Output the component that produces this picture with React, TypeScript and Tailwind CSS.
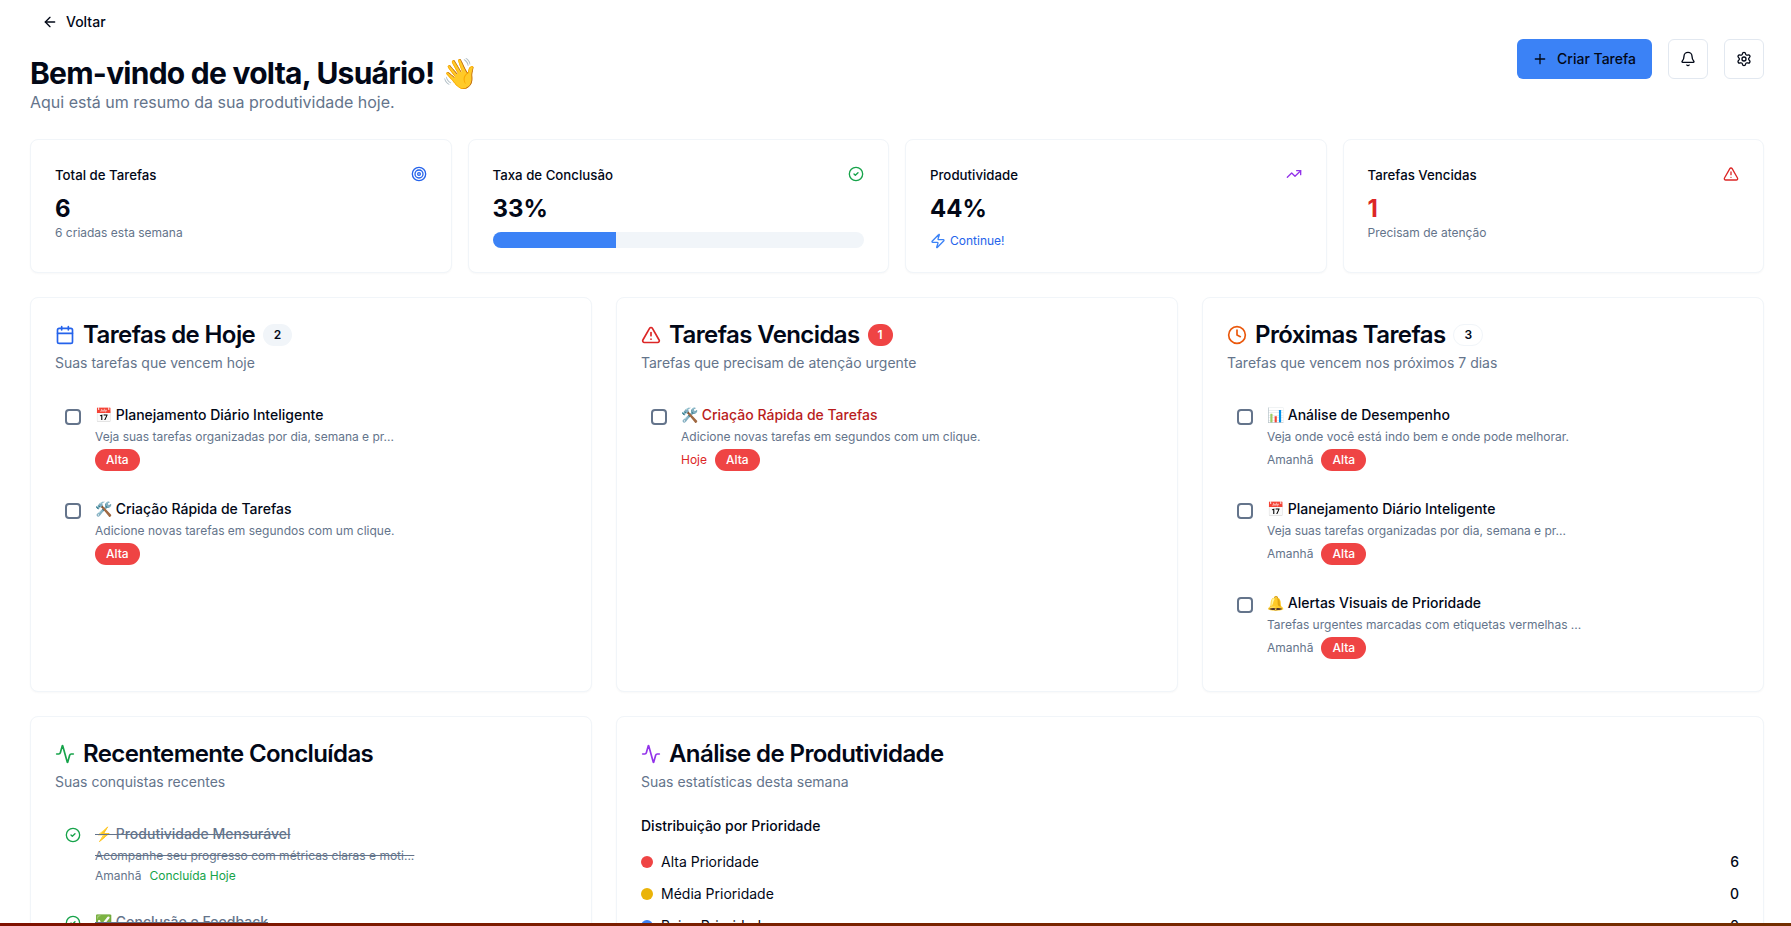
import { AlertTriangle, Activity, ArrowLeft, Bell, Calendar, CheckCircle2, CircleCheck, Clock, Plus, Settings, Target, TrendingUp, Zap } from 'lucide-react';
import type { ReactNode } from 'react';

const Alta = () => (
  <span className="inline-flex h-[22px] items-center rounded-full border border-transparent bg-[#ef4444] px-[10px] text-xs font-medium text-white">Alta</span>
);

interface TaskProps {
  emoji: string;
  title: string;
  desc: string;
  date?: string;
  overdue?: boolean;
}

const Task = ({ emoji, title, desc, date, overdue }: TaskProps) => (
  <div className="flex h-[82px] items-start gap-[14px] pl-[10px]">
    <div className="mt-[4px] h-4 w-4 shrink-0 rounded-[4px] border-2 border-[#64748b] bg-white" />
    <div className="min-w-0 flex-1">
      <div className={`text-sm leading-5 font-medium ${overdue ? 'text-[#b91c1c]' : 'text-[#020817]'}`}>{emoji} {title}</div>
      <div className="mt-[4px] text-xs leading-4 text-[#64748b]">{desc}</div>
      <div className="mt-[4px] flex items-center gap-2 text-xs">
        {date && <span className={overdue ? 'text-[#dc2626]' : 'text-[#64748b]'}>{date}</span>}
        <Alta />
      </div>
    </div>
  </div>
);

const StatCard = ({ title, icon, children }: { title: string; icon: ReactNode; children: ReactNode }) => (
  <div className="h-[134px] rounded-lg border border-[#f1f5f9] bg-white px-6 pt-6 shadow-[0_1px_2px_rgba(0,0,0,0.03)]">
    <div className="flex items-start justify-between">
      <span className="mt-[1px] text-[13.25px] leading-5 font-medium text-[#020817]">{title}</span>
      <span className="mt-[2px]">{icon}</span>
    </div>
    {children}
  </div>
);

const Panel = ({ icon, title, badge, sub, children, className }: { icon: ReactNode; title: string; badge?: ReactNode; sub: string; children: ReactNode; className?: string }) => (
  <div className={`rounded-lg border border-[#f1f5f9] bg-white px-6 pt-[21px] shadow-[0_1px_2px_rgba(0,0,0,0.03)] ${className ?? ''}`}>
    <div className="flex items-center gap-2 text-2xl leading-8 font-semibold tracking-tight text-[#020817]">
      {icon}
      <span>{title}</span>
      {badge}
    </div>
    <div className="mt-[2px] text-sm leading-5 text-[#64748b]">{sub}</div>
    {children}
  </div>
);

export default function App() {
  return (
    <div className="relative h-[926px] overflow-hidden bg-white font-['Inter',sans-serif] text-[#020817]">
      <div className="pl-[30px] pr-[27px]">
        <button className="ml-[12px] flex h-[44px] items-center gap-2 text-sm font-medium">
          <ArrowLeft className="h-4 w-4" /> Voltar
        </button>
        <div className="flex items-start justify-between">
          <div className="pt-[11px]">
            <h1 className="text-3xl leading-9 font-bold tracking-tight">Bem-vindo de volta, Usuário! 👋</h1>
            <p className="-mt-[1px] text-base leading-6 text-[#64748b]">Aqui está um resumo da sua produtividade hoje.</p>
          </div>
          <div className="-mt-[5px] flex items-center gap-4">
            <button className="flex h-10 items-center gap-[9px] rounded-md bg-[#3b82f6] pl-[15px] pr-4 text-sm font-medium text-[#020817]">
              <Plus className="h-4 w-4" /> Criar Tarefa
            </button>
            <button className="flex h-10 w-10 items-center justify-center rounded-md border border-[#e2e8f0] bg-white"><Bell className="h-4 w-4" /></button>
            <button className="flex h-10 w-10 items-center justify-center rounded-md border border-[#e2e8f0] bg-white"><Settings className="h-4 w-4" /></button>
          </div>
        </div>

        <div className="mt-[25px] grid grid-cols-4 gap-4">
          <StatCard title="Total de Tarefas" icon={<Target className="h-4 w-4 text-[#2563eb]" />}>
            <div className="mt-2 text-2xl leading-8 font-bold">6</div>
            <div className="text-xs leading-4 text-[#64748b]">6 criadas esta semana</div>
          </StatCard>
          <StatCard title="Taxa de Conclusão" icon={<CircleCheck className="h-4 w-4 text-[#16a34a]" />}>
            <div className="mt-2 text-2xl leading-8 font-bold">33%</div>
            <div className="mt-[7px] h-4 overflow-hidden rounded-full bg-[#f1f5f9]">
              <div className="h-full w-[33.3%] bg-[#3b82f6]" />
            </div>
          </StatCard>
          <StatCard title="Produtividade" icon={<TrendingUp className="h-4 w-4 text-[#9333ea]" />}>
            <div className="mt-2 text-2xl leading-8 font-bold">44%</div>
            <div className="mt-2 flex items-center gap-1 text-xs leading-4 text-[#2563eb]"><Zap className="h-4 w-4 text-[#3b82f6]" /> Continue!</div>
          </StatCard>
          <StatCard title="Tarefas Vencidas" icon={<AlertTriangle className="h-4 w-4 text-[#dc2626]" />}>
            <div className="mt-2 text-2xl leading-8 font-bold text-[#dc2626]">1</div>
            <div className="text-xs leading-4 text-[#64748b]">Precisam de atenção</div>
          </StatCard>
        </div>

        <div className="mt-6 grid grid-cols-3 gap-6">
          <Panel className="h-[395px]" icon={<Calendar className="h-5 w-5 text-[#2563eb]" />} title="Tarefas de Hoje" sub="Suas tarefas que vencem hoje"
            badge={<span className="flex h-[22px] items-center rounded-full bg-[#f1f5f9] px-[10.5px] text-xs font-semibold tracking-normal">2</span>}>
            <div className="mt-[32px]">
              <Task emoji="📅" title="Planejamento Diário Inteligente" desc="Veja suas tarefas organizadas por dia, semana e pr..." />
              <div className="h-[12px]" />
              <Task emoji="🛠️" title="Criação Rápida de Tarefas" desc="Adicione novas tarefas em segundos com um clique." />
            </div>
          </Panel>
          <Panel className="h-[395px]" icon={<AlertTriangle className="h-5 w-5 text-[#dc2626]" />} title="Tarefas Vencidas" sub="Tarefas que precisam de atenção urgente"
            badge={<span className="flex h-[22px] items-center rounded-full bg-[#ef4444] px-[10px] text-xs font-semibold tracking-normal text-white">1</span>}>
            <div className="mt-[32px]">
              <Task overdue emoji="🛠️" title="Criação Rápida de Tarefas" desc="Adicione novas tarefas em segundos com um clique." date="Hoje" />
            </div>
          </Panel>
          <Panel className="h-[395px]" icon={<Clock className="h-5 w-5 text-[#ea580c]" />} title="Próximas Tarefas" sub="Tarefas que vencem nos próximos 7 dias"
            badge={<span className="flex h-[22px] items-center rounded-full border border-[#f1f5f9] px-[10px] text-xs font-semibold tracking-normal">3</span>}>
            <div className="mt-[32px]">
              <Task emoji="📊" title="Análise de Desempenho" desc="Veja onde você está indo bem e onde pode melhorar." date="Amanhã" />
              <div className="h-[12px]" />
              <Task emoji="📅" title="Planejamento Diário Inteligente" desc="Veja suas tarefas organizadas por dia, semana e pr..." date="Amanhã" />
              <div className="h-[12px]" />
              <Task emoji="🔔" title="Alertas Visuais de Prioridade" desc="Tarefas urgentes marcadas com etiquetas vermelhas ..." date="Amanhã" />
            </div>
          </Panel>
        </div>

        <div className="mt-6 grid grid-cols-3 gap-6">
          <Panel className="h-[400px]" icon={<Activity className="h-5 w-5 text-[#16a34a]" />} title="Recentemente Concluídas" sub="Suas conquistas recentes">
            <div className="mt-[32px] flex flex-col gap-[28px]">
              <div className="flex gap-[14px] pl-[10px]">
                <CheckCircle2 className="mt-[3px] h-4 w-4 shrink-0 text-[#16a34a]" />
                <div className="min-w-0">
                  <div className="text-sm leading-5 font-medium text-[#64748b] line-through">⚡ Produtividade Mensurável</div>
                  <div className="mt-[4px] text-xs leading-4 text-[#64748b] line-through">Acompanhe seu progresso com métricas claras e moti...</div>
                  <div className="mt-[4px] flex gap-2 text-xs leading-4">
                    <span className="text-[#64748b]">Amanhã</span>
                    <span className="text-[#16a34a]">Concluída Hoje</span>
                  </div>
                </div>
              </div>
              <div className="flex gap-[14px] pl-[10px]">
                <CheckCircle2 className="mt-[3px] h-4 w-4 shrink-0 text-[#16a34a]" />
                <div className="text-sm leading-5 font-medium text-[#64748b] line-through">✅ Conclusão e Feedback</div>
              </div>
            </div>
          </Panel>
          <Panel className="col-span-2 h-[400px]" icon={<Activity className="h-5 w-5 text-[#9333ea]" />} title="Análise de Produtividade" sub="Suas estatísticas desta semana">
            <div className="mt-[24px] text-sm leading-5 font-medium">Distribuição por Prioridade</div>
            <div className="mt-4 flex flex-col gap-3 text-sm">
              {[['Alta Prioridade', '6', 'bg-[#ef4444]'], ['Média Prioridade', '0', 'bg-[#eab308]'], ['Baixa Prioridade', '0', 'bg-[#3b82f6]']].map(([label, n, c]) => (
                <div key={label} className="flex h-5 items-center justify-between">
                  <div className="flex items-center gap-2"><span className={`h-3 w-3 rounded-full ${c}`} /> {label}</div>
                  <span className="font-medium">{n}</span>
                </div>
              ))}
            </div>
          </Panel>
        </div>
      </div>
      <div className="absolute inset-x-0 bottom-0 h-[3px] bg-gradient-to-r from-[#7f1100] to-[#732e00]" />
    </div>
  );
}
